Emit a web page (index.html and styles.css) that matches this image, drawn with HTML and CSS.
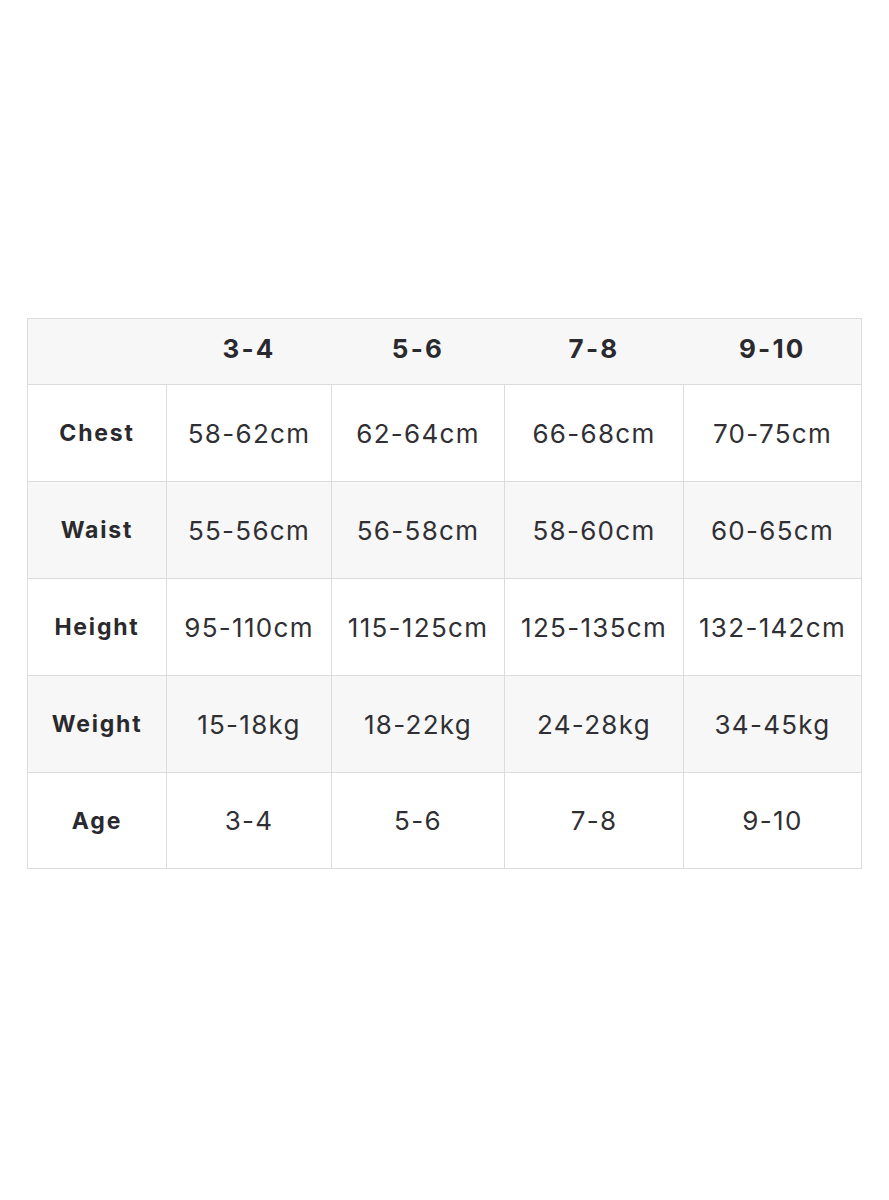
FILE: index.html
```html
<!DOCTYPE html>
<html>
<head>
<meta charset="utf-8">
<link rel="stylesheet" href="styles.css">
</head>
<body>
<div class="page">
  <table class="size-table">
    <colgroup>
      <col class="c-label">
      <col class="c1">
      <col class="c2">
      <col class="c3">
      <col class="c4">
    </colgroup>
    <thead>
      <tr class="head">
        <th></th><th>3-4</th><th>5-6</th><th>7-8</th><th>9-10</th>
      </tr>
    </thead>
    <tbody>
      <tr><th>Chest</th><td>58-62cm</td><td>62-64cm</td><td>66-68cm</td><td>70-75cm</td></tr>
      <tr class="alt"><th>Waist</th><td>55-56cm</td><td>56-58cm</td><td>58-60cm</td><td>60-65cm</td></tr>
      <tr><th>Height</th><td>95-110cm</td><td>115-125cm</td><td>125-135cm</td><td>132-142cm</td></tr>
      <tr class="alt"><th>Weight</th><td>15-18kg</td><td>18-22kg</td><td>24-28kg</td><td>34-45kg</td></tr>
      <tr class="last"><th>Age</th><td>3-4</td><td>5-6</td><td>7-8</td><td>9-10</td></tr>
    </tbody>
  </table>
</div>
</body>
</html>
```

FILE: styles.css
```css
html, body {
  margin: 0;
  padding: 0;
  background: #ffffff;
}
.page {
  padding: 318px 0 0 27px;
  font-family: "Inter", "Liberation Sans", sans-serif;
  color: #2b2b2f;
}
.size-table {
  border-collapse: collapse;
  table-layout: fixed;
  width: 834px;
  border: 1px solid #dcdcdc;
}
.c-label { width: 139px; }
.c1 { width: 165px; }
.c2 { width: 173px; }
.c3 { width: 179px; }
.c4 { width: 178px; }
.size-table th,
.size-table td {
  text-align: center;
  vertical-align: middle;
  padding: 0;
  border: 1px solid #dcdcdc;
}
.head {
  background: #f7f7f7;
  height: 66px;
}
.head th {
  border-left: none;
  border-right: none;
  padding-bottom: 6px;
  font-size: 26px;
  font-weight: 700;
  letter-spacing: 2.2px;
  color: #2a2a2e;
}
tbody tr {
  height: 97px;
}
tbody tr.last {
  height: 96px;
}
tbody tr.alt {
  background: #f7f7f7;
}
tbody th {
  font-size: 23px;
  font-weight: 700;
  letter-spacing: 1.8px;
  color: #2a2a2e;
}
tbody td {
  font-size: 26px;
  font-weight: 400;
  letter-spacing: 1.3px;
  color: #303034;
}
```
